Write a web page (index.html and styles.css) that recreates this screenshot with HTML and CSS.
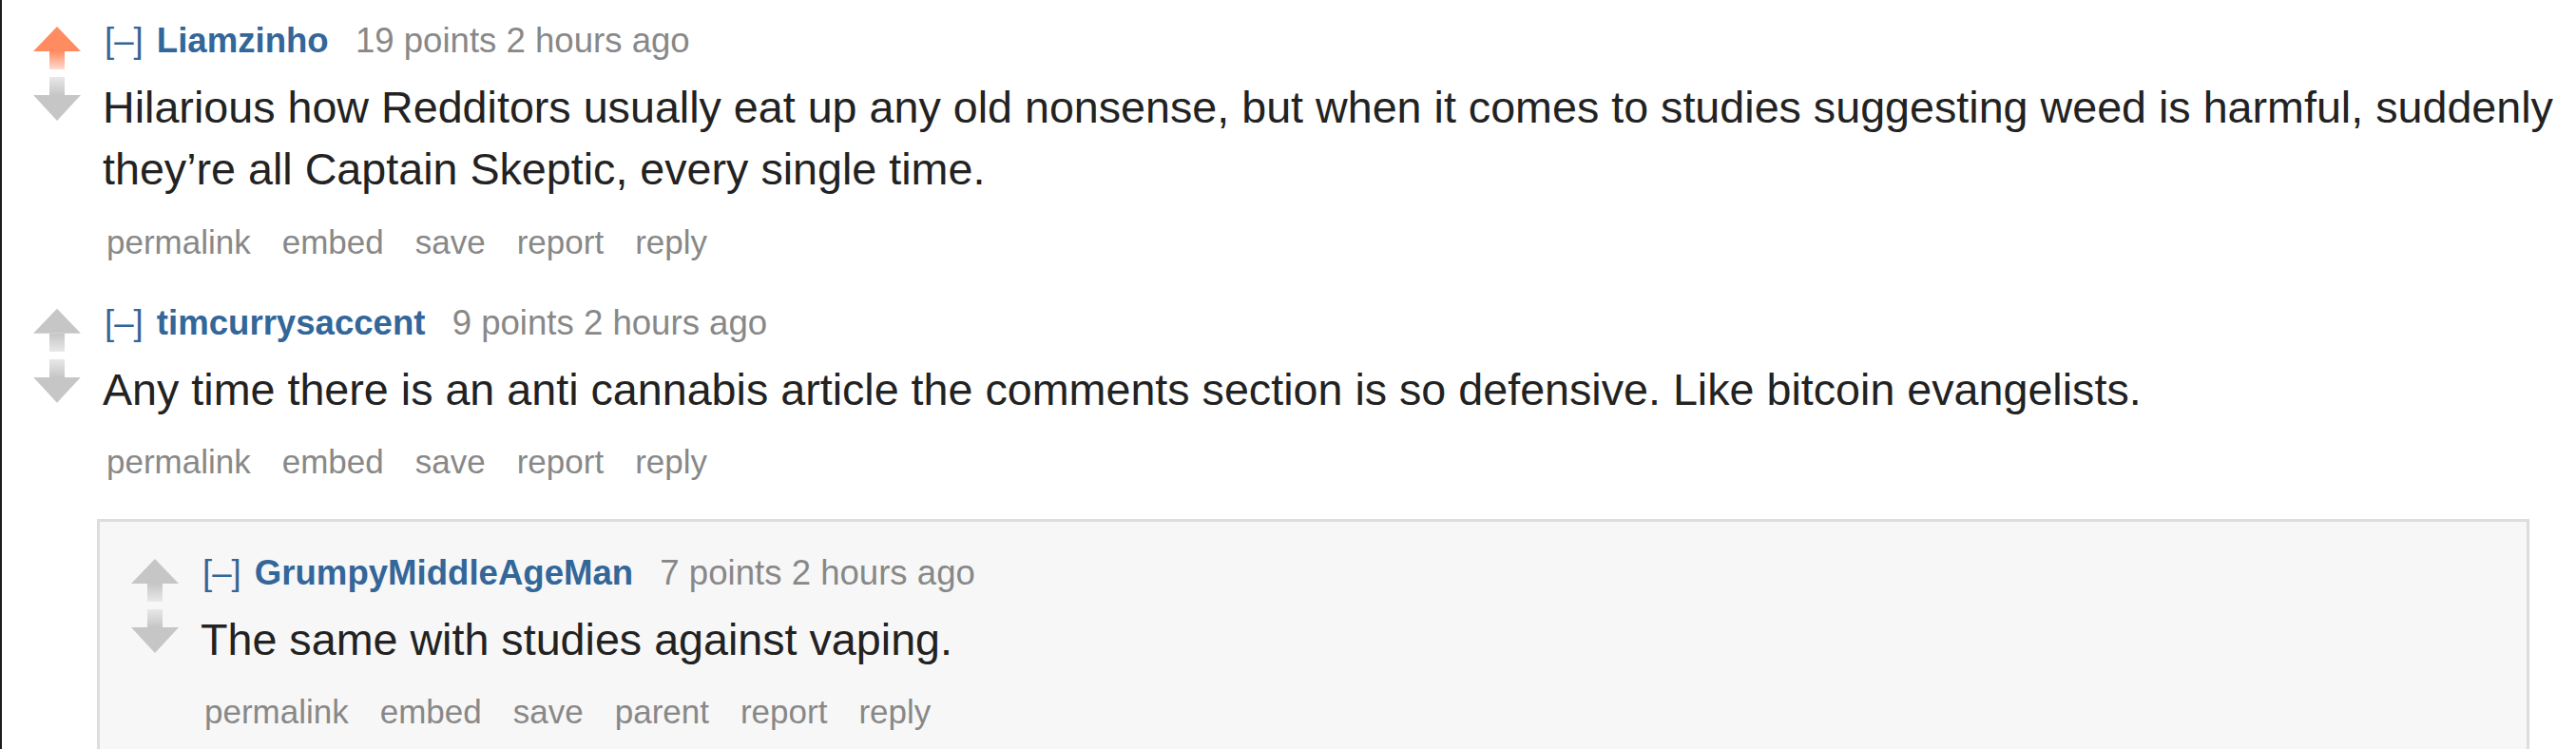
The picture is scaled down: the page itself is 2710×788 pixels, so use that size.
FILE: index.html
```html
<!DOCTYPE html>
<html lang="en">
<head>
  <meta charset="UTF-8">
  <title>Comments</title>
  <link rel="stylesheet" href="styles.css">
</head>
<body>

<div class="page">

  <div class="comment">
    <div class="row">
      <div class="midcol">
        <div class="arrow up upmod"></div>
        <div class="arrow down"></div>
      </div>
      <div class="entry">
        <p class="tagline">
          <a class="expand" href="#">[–]</a>
          <a class="author" href="#">Liamzinho</a>
          <span class="score">19 points</span>
          <time>2 hours ago</time>
        </p>
        <div class="md">Hilarious how Redditors usually eat up any old nonsense, but when it comes to studies suggesting weed is harmful, suddenly they’re all Captain Skeptic, every single time.</div>
        <ul class="buttons">
          <li><a href="#">permalink</a></li>
          <li><a href="#">embed</a></li>
          <li><a href="#">save</a></li>
          <li><a href="#">report</a></li>
          <li><a href="#">reply</a></li>
        </ul>
      </div>
    </div>
  </div>

  <div class="comment">
    <div class="row">
      <div class="midcol">
        <div class="arrow up"></div>
        <div class="arrow down"></div>
      </div>
      <div class="entry">
        <p class="tagline">
          <a class="expand" href="#">[–]</a>
          <a class="author" href="#">timcurrysaccent</a>
          <span class="score">9 points</span>
          <time>2 hours ago</time>
        </p>
        <div class="md">Any time there is an anti cannabis article the comments section is so defensive. Like bitcoin evangelists.</div>
        <ul class="buttons">
          <li><a href="#">permalink</a></li>
          <li><a href="#">embed</a></li>
          <li><a href="#">save</a></li>
          <li><a href="#">report</a></li>
          <li><a href="#">reply</a></li>
        </ul>
      </div>
    </div>

    <div class="child">
      <div class="comment">
        <div class="row">
          <div class="midcol">
            <div class="arrow up"></div>
            <div class="arrow down"></div>
          </div>
          <div class="entry">
            <p class="tagline">
              <a class="expand" href="#">[–]</a>
              <a class="author" href="#">GrumpyMiddleAgeMan</a>
              <span class="score">7 points</span>
              <time>2 hours ago</time>
            </p>
            <div class="md">The same with studies against vaping.</div>
            <ul class="buttons">
              <li><a href="#">permalink</a></li>
              <li><a href="#">embed</a></li>
              <li><a href="#">save</a></li>
              <li><a href="#">parent</a></li>
              <li><a href="#">report</a></li>
              <li><a href="#">reply</a></li>
            </ul>
          </div>
        </div>
      </div>
    </div>
  </div>

</div>

</body>
</html>
```

FILE: styles.css
```css
* {
  box-sizing: border-box;
}

body {
  margin: 0;
  background: #fff;
  font-family: "Liberation Sans", Arial, sans-serif;
  color: #222;
}

a {
  text-decoration: none;
}

.page {
  border-left: 2px solid #1c1c1c;
  min-height: 100vh;
  padding-top: 1px;
  overflow: hidden;
}

.comment {
  padding-top: 22px;
}

.page > .comment + .comment {
  margin-top: 23px;
}

.row {
  display: flex;
  align-items: flex-start;
}

/* vote arrows */
.midcol {
  flex: none;
  width: 50px;
  margin-left: 33px;
  margin-right: 23px;
  padding-top: 5px;
  display: flex;
  flex-direction: column;
  gap: 8px;
}

.arrow {
  width: 50px;
  display: flex;
  flex-direction: column;
  align-items: center;
}

.arrow::before,
.arrow::after {
  content: "";
  display: block;
}

.arrow.up::before {
  width: 50px;
  height: 26px;
  background: #c6c6c6;
  clip-path: polygon(50% 0, 100% 100%, 0 100%);
}

.arrow.up::after {
  width: 16px;
  height: 19px;
  background: linear-gradient(#c6c6c6, #e8e8e8);
}

.arrow.up.upmod::before {
  background: #ff8b60;
}

.arrow.up.upmod::after {
  background: linear-gradient(#ff8b60, #ffdccf);
}

.arrow.down::before {
  width: 16px;
  height: 19px;
  background: linear-gradient(#e8e8e8, #c6c6c6);
}

.arrow.down::after {
  width: 50px;
  height: 27px;
  background: #c6c6c6;
  clip-path: polygon(0 0, 100% 0, 50% 100%);
}

/* comment body */
.entry {
  flex: 1;
  min-width: 0;
}

.tagline {
  margin: 0;
  font-size: 36.6px;
  line-height: 40px;
  color: #888;
  white-space: nowrap;
}

.tagline .expand {
  color: #369;
  margin-left: 2px;
  margin-right: 4px;
}

.tagline .author {
  color: #369;
  font-weight: bold;
}

.tagline .score {
  margin-left: 18px;
}

.md {
  margin-top: 18px;
  font-size: 46.67px;
  line-height: 65.33px;
  color: #222;
}

.buttons {
  list-style: none;
  margin: 23px 0 0;
  padding: 0 0 0 4px;
  display: flex;
  gap: 33px;
  font-size: 35px;
  line-height: 40px;
}

.buttons a {
  color: #888;
}

/* nested replies */
.child {
  margin: 40px 49px 0 100px;
  padding: 12px 0 40px;
  background: #f7f7f7;
  border: 3px solid #ddd;
}
```
